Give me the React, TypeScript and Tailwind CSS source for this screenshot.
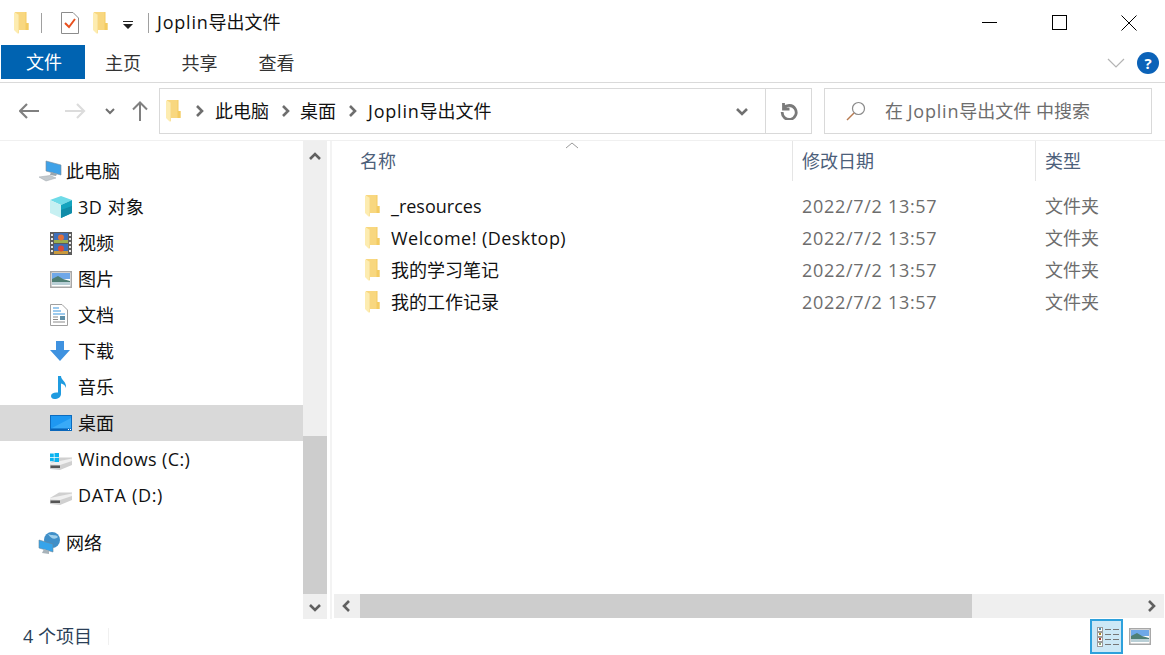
import React from "react";

const Folder = () => (
  <svg viewBox="0 0 15 22" width="15" height="22">
    <path d="M1 0 H12 V11 H14.500 V18 H4 V15 H1 Z" fill="#f8d77f" />
    <path d="M11.500 0 H12.500 V11 H14.500 V18 H11.500 Z" fill="#f3cb62" />
    <path d="M0 0.500 H1 L5 3 V21.500 L3.500 21.500 L0 18 Z" fill="#fdecb0" />
    <path d="M4.500 3 H5 V21 H4.500 Z" fill="#f6d88a" />
  </svg>
);

const Chevron = ({ dir, color = "#606060" }: { dir: "up" | "down" | "left" | "right"; color?: string }) => {
  const d = {
    up: "M2 9 L7 4 L12 9",
    down: "M2 5 L7 10 L12 5",
    left: "M9 2 L4 7 L9 12",
    right: "M5 2 L10 7 L5 12",
  }[dir];
  return (
    <svg width="14" height="14" viewBox="0 0 14 14">
      <path d={d} fill="none" stroke={color} strokeWidth="2.600" />
    </svg>
  );
};

const Landscape = () => (
  <svg width="22" height="17" viewBox="0 0 22 17">
    <rect x="0.750" y="0.750" width="20.500" height="15.500" fill="#fff" stroke="#a8a8a8" strokeWidth="1.500" />
    <rect x="2" y="2" width="18" height="6" fill="#6fa8e8" />
    <path d="M2 8 L8 5 L13 8 L20 10 L20 14 L2 14 Z" fill="#4f7f74" />
    <rect x="2" y="11" width="18" height="3" fill="#b9cfd6" />
  </svg>
);

const icons: Record<string, React.ReactNode> = {
  pc: (
    <svg width="24" height="22" viewBox="0 0 24 22">
      <path d="M8 1 L23 5 L23 15 L8 11 Z" fill="#3fa2e8" stroke="#7b8b99" strokeWidth="0.600" />
      <path d="M13 12 L19 14 L18 16 L12 15 Z" fill="#9aa6ae" />
      <path d="M1 17 L12 15.500 L18 18 L8 21 Z" fill="#c3c9cd" stroke="#9fa7ad" strokeWidth="0.500" />
    </svg>
  ),
  cube: (
    <svg width="22" height="22" viewBox="0 0 22 22">
      <path d="M11 0 L22 4 L11 9 L0 4 Z" fill="#6fdbe8" />
      <path d="M0 4 L11 9 L11 22 L0 17 Z" fill="#c6f0f2" />
      <path d="M11 9 L22 4 L22 17 L11 22 Z" fill="#14a4be" />
      <path d="M11 14 L22 10 L22 17 L11 22 Z" fill="#0f8ca8" />
    </svg>
  ),
  video: (
    <svg width="22" height="23" viewBox="0 0 22 23">
      <rect width="22" height="23" fill="#5c5c5c" />
      <rect x="4" y="1" width="14" height="10" fill="#3e6fb8" />
      <rect x="4" y="12" width="14" height="10" fill="#3e6fb8" />
      <rect x="4" y="8" width="14" height="3" fill="#9cb04f" />
      <rect x="4" y="19" width="14" height="3" fill="#c99a3e" />
      <circle cx="11" cy="5.500" r="3" fill="#e0703a" />
      <circle cx="11" cy="16.500" r="3" fill="#d8483a" />
      {[2, 6, 10, 14, 18].map((y) => (
        <g key={y}>
          <rect x="1" y={y} width="2" height="2" fill="#e6e6e6" />
          <rect x="19" y={y} width="2" height="2" fill="#e6e6e6" />
        </g>
      ))}
    </svg>
  ),
  pic: <Landscape />,
  doc: (
    <svg width="18" height="22" viewBox="0 0 18 22">
      <path d="M0.500 0.500 L12 0.500 L17.500 6 L17.500 21.500 L0.500 21.500 Z" fill="#fff" stroke="#a0a0a0" />
      <path d="M3 4 H9 M3 7 H11 M3 10 H15" stroke="#3a96dd" strokeWidth="1.200" />
      <path d="M3 13 H8 M3 15.500 H8 M3 18 H15" stroke="#8a8a8a" strokeWidth="1" />
      <rect x="10" y="12" width="5" height="4" fill="#5e8fa8" />
    </svg>
  ),
  down: (
    <svg width="20" height="20" viewBox="0 0 20 20">
      <path d="M6 0 H14 V9 H20 L10 20 L0 9 H6 Z" fill="#3f92e0" />
    </svg>
  ),
  music: (
    <svg width="18" height="24" viewBox="0 0 18 24">
      <path d="M8 1 H11 C11 5 17 7 16 13 C15 10 13 9 11 8.500 V19 C11 22 8 24 4.500 24 C2 24 1 22.500 1 21 C1 18.500 4 17 8 17.500 Z" fill="#1f9be0" />
    </svg>
  ),
  desktop: (
    <svg width="22" height="16" viewBox="0 0 22 16">
      <rect x="0.500" y="0.500" width="21" height="15" fill="#1e98f2" stroke="#0b6cc0" />
      <path d="M1 13.500 L21 3 L21 13.500 Z" fill="#39aaf7" />
      <rect x="1" y="13.500" width="20" height="2" fill="#0a63b5" />
      <rect x="18" y="14" width="1" height="1" fill="#fff" />
      <rect x="20" y="14" width="1" height="1" fill="#fff" />
    </svg>
  ),
  win: (
    <svg width="23" height="18" viewBox="0 0 23 18" className="mt-[6px]">
      <path d="M0 10 L9 4.500 L22 4.500 L22 12 L10 17 L0 16 Z" fill="#d0d0d0" />
      <path d="M0 10 L22 5.500 L22 8 L10 12 L0 11.500 Z" fill="#f0f0f0" />
      <rect x="0.500" y="12.500" width="9.500" height="2.500" fill="#555" />
      <path d="M0 0.500 H3.800 V4 H0 Z M4.500 0 H9 V4 H4.500 Z M0 4.800 H3.800 V8.200 H0 Z M4.500 4.800 H9 V9 H4.500 Z" fill="#0cb4f0" />
    </svg>
  ),
  drive: (
    <svg width="23" height="14" viewBox="0 0 23 14" className="mt-[7px]">
      <path d="M0 6 L9 0.500 L22 0.500 L22 8 L10 13 L0 12 Z" fill="#d0d0d0" />
      <path d="M0 6 L22 1.500 L22 4 L10 8 L0 7.500 Z" fill="#f0f0f0" />
      <rect x="0.500" y="8.500" width="9.500" height="2.500" fill="#555" />
    </svg>
  ),
  net: (
    <svg width="24" height="24" viewBox="0 0 24 24">
      <circle cx="14" cy="9" r="8" fill="#3f8fc8" />
      <path d="M10 3 C14 5 18 3 20 6 C17 9 13 8 10 3 Z" fill="#9fd0ec" />
      <path d="M1 9 L15 13 L15 21 L1 17 Z" fill="#36a4ea" stroke="#6c8699" strokeWidth="0.600" />
      <path d="M6 18 L11 20 L11 23 L4 22 Z" fill="#a8b3ba" />
    </svg>
  ),
};

const navItems: { icon: string; label: string; top?: boolean; selected?: boolean; text?: string }[] = [
  { icon: "pc", label: "此电脑", top: true },
  { icon: "cube", label: "3D 对象", text: "tracking-[0.5px]" },
  { icon: "video", label: "视频" },
  { icon: "pic", label: "图片" },
  { icon: "doc", label: "文档" },
  { icon: "down", label: "下载" },
  { icon: "music", label: "音乐" },
  { icon: "desktop", label: "桌面", selected: true },
  { icon: "win", label: "Windows (C:)", text: "tracking-[0.35px]" },
  { icon: "drive", label: "DATA (D:)", text: "tracking-[0.7px]" },
];

const files: { name: string; text?: string }[] = [
  { name: "_resources" },
  { name: "Welcome! (Desktop)", text: "tracking-[0.45px]" },
  { name: "我的学习笔记" },
  { name: "我的工作记录" },
];

const Joplin = () => <span className="tracking-[0.8px]">Joplin</span>;

const viewColors = ["#4f8fb0", "#a88a2a", "#b03a2a", "#8aa878"];

export default function App() {
  return (
    <div
      className="w-[1165px] h-[655px] bg-white overflow-hidden flex flex-col text-[18px] text-[#1a1a1a]"
      style={{ fontFamily: '"Open Sans", "Noto Sans CJK SC", sans-serif' }}
    >
      {/* Title bar */}
      <div className="h-[45px] flex items-center shrink-0">
        <div className="w-[41px] pl-[14px] flex items-center">
          <Folder />
        </div>
        <div className="w-px h-[20px] bg-[#a0a0a0] mr-[19px]" />
        <svg width="18" height="22" viewBox="0 0 18 22" className="mr-[14px]">
          <path d="M0.500 0.500 L12 0.500 L17.500 6 L17.500 21.500 L0.500 21.500 Z" fill="#fff" stroke="#8c8c8c" />
          <path d="M4 11 L8 15 L14 7" fill="none" stroke="#e8501e" strokeWidth="2" />
        </svg>
        <Folder />
        <svg width="10" height="8" viewBox="0 0 10 8" className="ml-[15px] mr-[15px] mt-[5px]">
          <path d="M0 0 H10 V1 H0 Z M0 3 H10 L5 8 Z" fill="#222" />
        </svg>
        <div className="w-px h-[20px] bg-[#a0a0a0] mr-[8px]" />
        <span className="text-[18px] text-[#111]"><Joplin />导出文件</span>
        <div className="ml-auto flex items-center mr-px">
          <div className="w-[70px] h-[45px] flex items-center justify-center">
            <div className="w-[15px] h-px bg-black" />
          </div>
          <div className="w-[70px] h-[45px] flex items-center justify-center">
            <div className="w-[15px] h-[15px] border border-black" />
          </div>
          <div className="w-[70px] h-[45px] flex items-center justify-center">
            <svg width="16" height="16" viewBox="0 0 16 16">
              <path d="M0.500 0.500 L15.500 15.500 M15.500 0.500 L0.500 15.500" stroke="#000" strokeWidth="1" />
            </svg>
          </div>
        </div>
      </div>

      {/* Ribbon tabs */}
      <div className="h-[38px] shrink-0 flex items-start pl-px border-b border-[#dadada]">
        <div className="w-[84px] h-[34px] bg-[#0063b1] text-white flex items-center justify-center pl-[2px]">文件</div>
        <div className="w-[76px] h-[36px] flex items-center justify-center text-[#333]">主页</div>
        <div className="w-[77px] h-[36px] flex items-center justify-center text-[#333]">共享</div>
        <div className="w-[77px] h-[36px] flex items-center justify-center text-[#333]">查看</div>
        <div className="ml-auto flex items-center mr-[6px] h-[36px] gap-[12px]">
          <svg width="18" height="10" viewBox="0 0 18 10">
            <path d="M1 1 L9 9 L17 1" fill="none" stroke="#b4b4b4" strokeWidth="1.200" />
          </svg>
          <div className="w-[22px] h-[22px] rounded-full bg-[#0b62b8] text-white font-bold text-[15px] flex items-center justify-center">
            ?
          </div>
        </div>
      </div>

      {/* Address row */}
      <div className="h-[58px] shrink-0 flex items-start border-b border-[#f0f0f0] pt-[5px]">
        <div className="w-[159px] h-[46px] flex items-center pl-[19px]">
          <svg width="21" height="18" viewBox="0 0 21 18">
            <path d="M1 9 H20 M8 2 L1 9 L8 16" fill="none" stroke="#808080" strokeWidth="2.200" />
          </svg>
          <svg width="21" height="18" viewBox="0 0 21 18" className="ml-[25px]">
            <path d="M0 9 H19 M12 2 L19 9 L12 16" fill="none" stroke="#dcdcdc" strokeWidth="2.200" />
          </svg>
          <svg width="10" height="7" viewBox="0 0 10 7" className="ml-[19px]">
            <path d="M1 1 L5 5 L9 1" fill="none" stroke="#707070" strokeWidth="2" />
          </svg>
          <svg width="16" height="20" viewBox="0 0 16 20" className="ml-[17px]">
            <path d="M8 20 V1.500 M1 8.500 L8 1.500 L15 8.500" fill="none" stroke="#808080" strokeWidth="2" />
          </svg>
        </div>
        <div className="w-[653px] h-[46px] border border-[#d9d9d9] flex items-center">
          <div className="flex-1 flex items-center pl-[6px]">
            <Folder />
            <span className="ml-[11px] mr-[9px]"><Chevron dir="right" color="#6e6e6e" /></span>
            <span className="text-[#111]">此电脑</span>
            <span className="ml-[9px] mr-[8px]"><Chevron dir="right" color="#6e6e6e" /></span>
            <span className="text-[#111]">桌面</span>
            <span className="ml-[9px] mr-[9px]"><Chevron dir="right" color="#6e6e6e" /></span>
            <span className="text-[#111]"><Joplin />导出文件</span>
          </div>
          <div className="w-[46px] flex justify-center">
            <Chevron dir="down" color="#707070" />
          </div>
          <div className="w-[46px] h-full border-l border-[#d9d9d9] flex items-center justify-center">
            <svg width="18" height="18" viewBox="0 0 18 18">
              <path d="M3.500 1 V7 H9.500 M3.800 6 A7 7 0 1 1 2.200 10" fill="none" stroke="#7a7a7a" strokeWidth="2.800" />
            </svg>
          </div>
        </div>
        <div className="w-[328px] h-[46px] border border-[#d9d9d9] ml-[12px] flex items-center pl-[21px] text-[#6d6d6d]">
          <svg width="20" height="20" viewBox="0 0 20 20">
            <circle cx="12.500" cy="7.500" r="6" fill="none" stroke="#8a8a8a" strokeWidth="1.200" />
            <path d="M8 12 L1 19" stroke="#b87a50" strokeWidth="1.500" />
          </svg>
          <span className="ml-[19px]">在 <Joplin />导出文件 中搜索</span>
        </div>
      </div>

      {/* Main */}
      <div className="flex-1 min-h-0 flex">
        <div className="w-[303px] shrink-0 flex flex-col pt-[12px]">
          {navItems.map((n) => (
            <div
              key={n.label}
              className={`h-[36px] flex items-center shrink-0 ${n.selected ? "bg-[#d9d9d9]" : ""}`}
            >
              <div className={`${n.top ? "w-[66px] pl-[38px]" : "w-[78px] pl-[50px]"} flex items-center shrink-0`}>
                {icons[n.icon]}
              </div>
              <span className={`text-[#111] ${n.text ?? ""}`}>{n.label}</span>
            </div>
          ))}
          <div className="h-[48px] flex items-end shrink-0">
            <div className="h-[36px] flex items-center">
              <div className="w-[66px] pl-[38px] flex items-center">{icons.net}</div>
              <span className="text-[#111]">网络</span>
            </div>
          </div>
        </div>
        <div className="w-[24px] shrink-0 bg-[#efefef] flex flex-col">
          <div className="h-[32px] flex items-center justify-center"><Chevron dir="up" /></div>
          <div className="h-[263px]" />
          <div className="flex-1 bg-[#cdcdcd]" />
          <div className="h-[25px] flex items-center justify-center"><Chevron dir="down" /></div>
        </div>
        <div className="w-[3px] shrink-0" />
        <div className="w-[2px] shrink-0 bg-[#f3f3f3]" />
        <div className="flex-1 min-w-0 flex flex-col">
          <div className="flex-1 min-h-0 relative">
            <svg width="14" height="7" viewBox="0 0 14 7" className="absolute left-[233px] top-[1px]">
              <path d="M1 6 L7 1 L13 6" fill="none" stroke="#9a9a9a" strokeWidth="1" />
            </svg>
            <div className="h-[49px] flex text-[#4c607a]">
              <div className="w-[461px] pl-[28px] h-[40px] flex items-center border-r border-[#e5e5e5]">名称</div>
              <div className="w-[243px] pl-[9px] h-[40px] flex items-center border-r border-[#e5e5e5]">修改日期</div>
              <div className="pl-[9px] h-[40px] flex items-center">类型</div>
            </div>
            {files.map((f) => (
              <div key={f.name} className="h-[32px] flex items-center">
                <div className="w-[59px] pl-[33px] flex items-center shrink-0"><Folder /></div>
                <span className={`w-[411px] shrink-0 text-[#111] ${f.text ?? ""}`}>{f.name}</span>
                <span className="w-[243px] shrink-0 text-[#6d6d6d] tracking-[0.7px]">2022/7/2 13:57</span>
                <span className="text-[#6d6d6d]">文件夹</span>
              </div>
            ))}
          </div>
          <div className="h-[24px] shrink-0 ml-[2px] mb-[1px] mr-px bg-[#efefef] flex items-center">
            <div className="w-[26px] flex justify-center"><Chevron dir="left" /></div>
            <div className="w-[612px] h-full bg-[#cdcdcd]" />
            <div className="flex-1" />
            <div className="w-[26px] flex justify-center"><Chevron dir="right" /></div>
          </div>
        </div>
      </div>

      {/* Status bar */}
      <div className="h-[36px] shrink-0 flex items-start pl-[23px] text-[#2b3f57]">
        <div className="h-[35px] flex items-center">
          <span>4 个项目</span>
          <div className="w-px h-[17px] bg-[#f0f0f0] ml-[16px]" />
        </div>
        <div className="ml-auto flex items-center pr-[14px] gap-[6px]">
          <div className="w-[33px] h-[35px] bg-[#cce8f6] border-2 border-[#2ea1dc] flex flex-col justify-center pl-[5px]">
            {viewColors.map((c) => (
              <div key={c} className="flex items-center h-[5px]">
                <div className="w-[6px] h-[5px] border border-[#9a9a9a] bg-white mr-[2px] flex items-center justify-center">
                  <div className="w-[2px] h-[2px]" style={{ backgroundColor: c }} />
                </div>
                <div className="w-[6px] h-px bg-[#777] mr-[2px]" />
                <div className="w-[6px] h-px bg-[#777]" />
              </div>
            ))}
          </div>
          <Landscape />
        </div>
      </div>
    </div>
  );
}
